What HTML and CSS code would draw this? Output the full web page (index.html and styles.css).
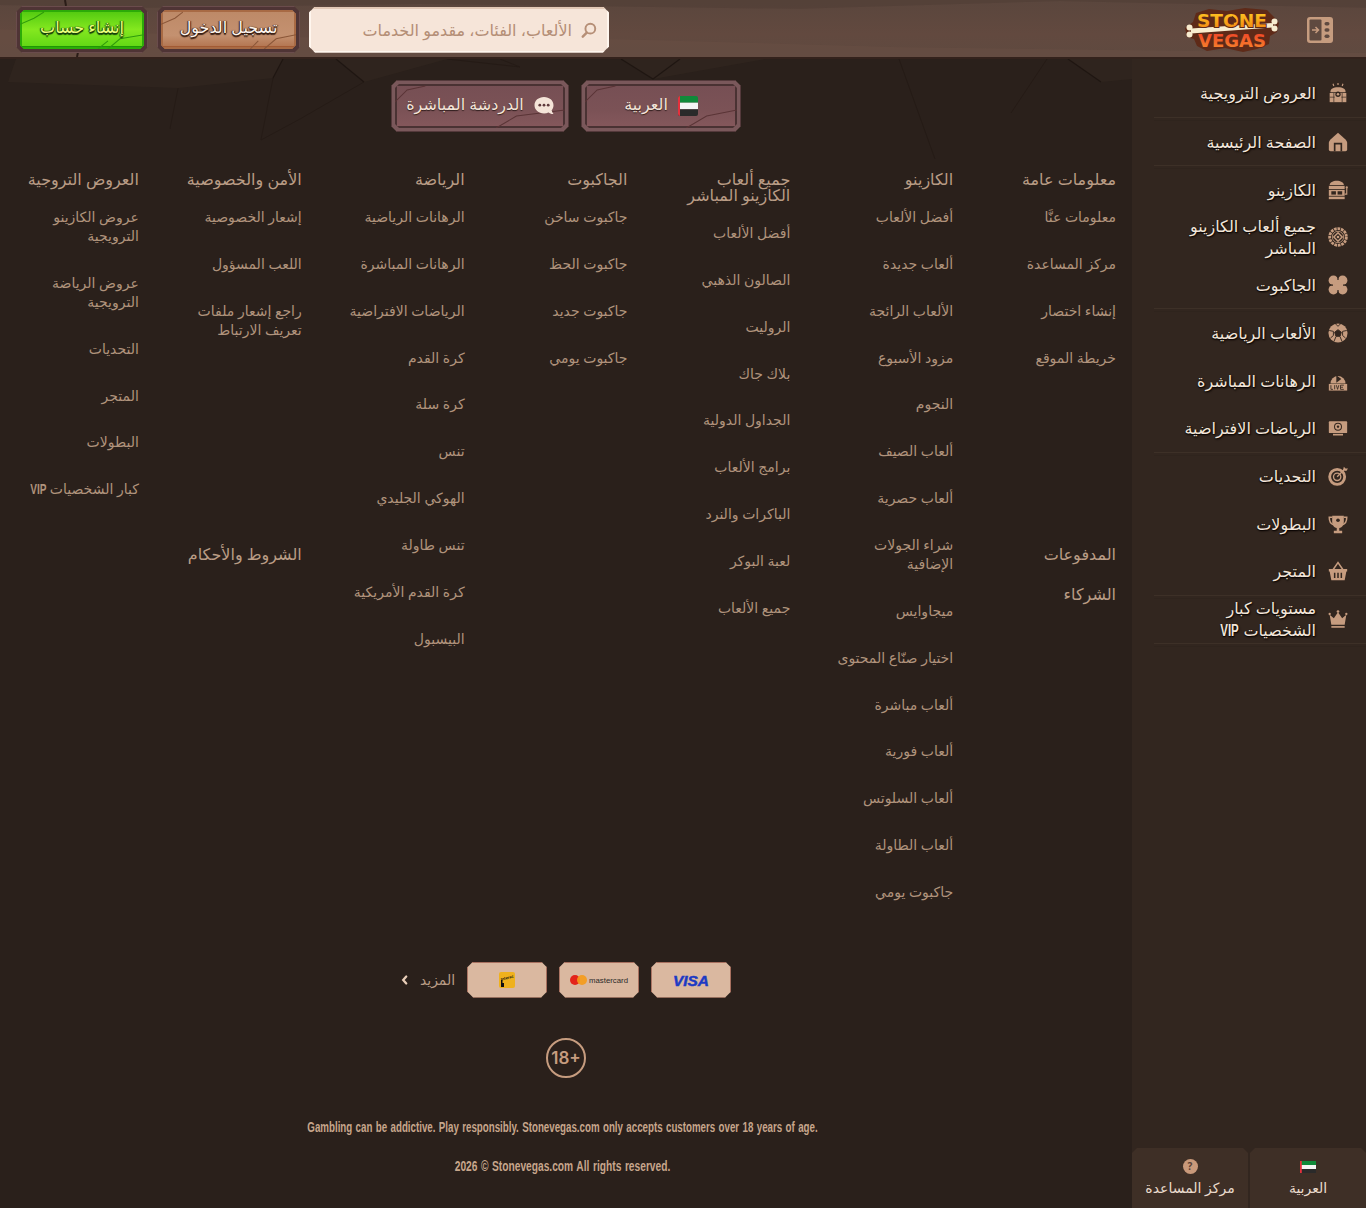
FILE: index.html
```html
<!DOCTYPE html>
<html lang="ar" dir="rtl">
<head>
    <meta charset="UTF-8">
    <title>Stone Vegas</title>
    <link rel="stylesheet" href="styles.css">
</head>
<body>
    <header class="topbar">
        <svg class="topbar-cracks" viewBox="0 0 1366 58" preserveAspectRatio="none">
            <path d="M0 30 L300 38 L620 40 L900 48 L1366 54 V58 H0Z" fill="#6a5045" opacity=".45"/>
            <path d="M0 0 H1366 V8 L1060 1 L800 9 L420 4 L150 8 L0 5Z" fill="#4e3b33" opacity=".5"/>
            <path d="M65 0 L66 6 M78 53 L77 58" fill="none" stroke="#2a1c17" stroke-width="2"/>
        </svg>
        <div class="topbar-right">
            <svg class="exit-icon" viewBox="0 0 28 28">
                <rect x="1" y="1" width="26" height="26" rx="3" fill="#c69c7f"/>
                <rect x="3.500" y="3.500" width="12" height="21" rx="1" fill="#5f4a40"/>
                <path d="M6 14h6M9.500 11l3 3-3 3" fill="none" stroke="#c69c7f" stroke-width="1.500"/>
                <rect x="18.500" y="6" width="5" height="3.400" rx="1.700" fill="#5f4a40"/>
                <rect x="18.500" y="12.300" width="5" height="3.400" rx="1.700" fill="#5f4a40"/>
                <rect x="18.500" y="18.600" width="5" height="3.400" rx="1.700" fill="#5f4a40"/>
            </svg>
            <svg class="logo" viewBox="0 0 94 44">
                <defs>
                    <linearGradient id="logoTop" x1="0" y1="0" x2="0" y2="1"><stop offset="0" stop-color="#ffcb24"/><stop offset="1" stop-color="#f0800f"/></linearGradient>
                    <linearGradient id="logoBottom" x1="0" y1="0" x2="0" y2="1"><stop offset="0" stop-color="#ee3f28"/><stop offset="1" stop-color="#f88b2c"/></linearGradient>
                </defs>
                <path d="M11 5 L24 1 L42 3 L60 0 L82 2 L87 7 L90 10 L94 15 L92 24 L85 28 L84 36 L72 41 L58 44 L40 40 L22 43 L12 38 L9 31 L2 29 L0 20 L8 14 Z" fill="#5e2a18"/>
                <path d="M6 20.500 L88 15 L88 19.500 L6 25.500Z" fill="#f7eccf"/>
                <circle cx="4.500" cy="19.500" r="3" fill="#f7eccf"/><circle cx="4.500" cy="26.500" r="3" fill="#f7eccf"/>
                <circle cx="89.500" cy="13.500" r="3" fill="#f7eccf"/><circle cx="89.500" cy="20.500" r="3" fill="#f7eccf"/>
                <text class="logo-word" x="47" y="19" text-anchor="middle" textLength="70" lengthAdjust="spacingAndGlyphs" fill="url(#logoTop)">STONE</text>
                <text class="logo-word" x="47" y="39" text-anchor="middle" textLength="68" lengthAdjust="spacingAndGlyphs" fill="url(#logoBottom)">VEGAS</text>
                <path d="M47.500 8 C49.500 10 51.500 11 51.500 13 C51.500 15 49 15 48.200 14 L49 16.500 H46 L46.800 14 C46 15 43.500 15 43.500 13 C43.500 11 45.500 10 47.500 8Z" fill="#5e2a18"/>
            </svg>
        </div>
        <div class="topbar-left">
            <form class="search">
                <svg class="search-icon" viewBox="0 0 18 18">
                    <circle cx="10.500" cy="7.500" r="5.500" fill="none" stroke="#b68f77" stroke-width="2.200"/>
                    <path d="M6.500 12 L2 16.500" stroke="#b68f77" stroke-width="2.800" stroke-linecap="round"/>
                </svg>
                <span class="search-placeholder">الألعاب، الفئات، مقدمو الخدمات</span>
            </form>
            <a class="stone-btn btn-login">
                <span class="stone-btn-face">
                    <svg class="stone-cracks" viewBox="0 0 136 38" preserveAspectRatio="none"><path d="M0 14 L14 8 L22 2 M104 38 L116 28 L136 24 M90 38 L98 30" fill="none" stroke="#8a5638" stroke-width="1"/></svg>
                    <span class="stone-btn-label">تسجيل الدخول</span>
                </span>
            </a>
            <a class="stone-btn btn-signup">
                <span class="stone-btn-face">
                    <svg class="stone-cracks" viewBox="0 0 124 38" preserveAspectRatio="none"><path d="M0 14 L14 8 L24 2 M88 38 L100 28 L124 24 M78 38 L88 30" fill="none" stroke="#2f9a0c" stroke-width="1"/></svg>
                    <span class="stone-btn-label">إنشاء حساب</span>
                </span>
            </a>
        </div>
    </header>

    <div class="page">
        <aside class="sidebar">
            <nav class="side-nav">
                <a class="side-item">
                    <svg class="side-icon" viewBox="0 0 24 24"><path d="M12 0v2.500M6 1l1 2.500M18 1l-1 2.500" stroke="#c69c7f" stroke-width="1.400"/><path d="M3 10c0-3 3-5 9-5s9 2 9 5v1H3z" fill="#c69c7f"/><path d="M2 12h20v11H2z" fill="#c69c7f"/><circle cx="12" cy="13.500" r="3.200" fill="#32261f"/><circle cx="12" cy="13.500" r="1.500" fill="#c69c7f"/><path d="M7 12v11M17 12v11M2 17h6M16 17h6" stroke="#32261f" stroke-width=".8"/></svg>
                    <span>العروض الترويجية</span>
                </a>
                <hr class="side-rule">
                <a class="side-item">
                    <svg class="side-icon" viewBox="0 0 24 24"><path d="M12 1 L21 9 Q23 11 23 13 V21 Q23 23 21 23 H3 Q1 23 1 21 V13 Q1 11 3 9 Z" fill="#c69c7f"/><path d="M7 23V13h10v10h-2v-8H9v8z" fill="#32261f"/></svg>
                    <span>الصفحة الرئيسية</span>
                </a>
                <hr class="side-rule">
                <a class="side-item">
                    <svg class="side-icon" viewBox="0 0 24 24"><path d="M2 6c0-3 4-5 8.500-5s8.500 2 8.500 5z" fill="#c69c7f"/><rect x="1" y="7" width="19" height="4" fill="#c69c7f"/><rect x="1" y="12" width="19" height="7" fill="#c69c7f"/><rect x="4" y="13.500" width="5.500" height="4" fill="#32261f"/><rect x="11.500" y="13.500" width="5.500" height="4" fill="#32261f"/><rect x="1" y="20" width="19" height="3" fill="#c69c7f"/><path d="M22.500 10v7h-2.500" fill="none" stroke="#c69c7f" stroke-width="1.400"/><circle cx="22.500" cy="9" r="1.400" fill="#c69c7f"/></svg>
                    <span>الكازينو</span>
                </a>
                <a class="side-item">
                    <svg class="side-icon" viewBox="0 0 24 24"><circle cx="12" cy="12" r="10" fill="none" stroke="#c69c7f" stroke-width="3.400" stroke-dasharray="3.200 1"/><circle cx="12" cy="12" r="6.800" fill="none" stroke="#c69c7f" stroke-width="1"/><path d="M12 7l5 5-5 5-5-5z" fill="none" stroke="#c69c7f" stroke-width="1.800"/><circle cx="12" cy="12" r="1.600" fill="#c69c7f"/></svg>
                    <span>جميع ألعاب الكازينو المباشر</span>
                </a>
                <a class="side-item">
                    <svg class="side-icon" viewBox="0 0 24 24"><circle cx="6.500" cy="6.500" r="5.800" fill="#c69c7f"/><circle cx="17.500" cy="6.500" r="5.800" fill="#c69c7f"/><circle cx="6.500" cy="17.500" r="5.800" fill="#c69c7f"/><circle cx="17.500" cy="17.500" r="5.800" fill="#c69c7f"/><path d="M12 7l5 5-5 5-5-5z" fill="#c69c7f"/><path d="M12 0V6M12 24V18M0 12H6M24 12H18" stroke="#32261f" stroke-width="1.500"/></svg>
                    <span>الجاكبوت</span>
                </a>
                <hr class="side-rule">
                <a class="side-item">
                    <svg class="side-icon" viewBox="0 0 24 24"><circle cx="12" cy="12" r="11.500" fill="#c69c7f"/><path d="M12 8l4 3-1.500 5h-5L8 11zM9 1l3 3 3-3M1.500 9l5 1 0 5-3.500 3M22.500 9l-5 1 0 5 3.500 3M7 22.500l2.500-6M17 22.500l-2.500-6" fill="none" stroke="#32261f" stroke-width="1.100"/><path d="M12 8l4 3-1.500 5h-5L8 11z" fill="#32261f"/></svg>
                    <span>الألعاب الرياضية</span>
                </a>
                <a class="side-item">
                    <svg class="side-icon" viewBox="0 0 24 24"><path d="M3 15a9 9 0 1 1 18 0z" fill="#c69c7f"/><path d="M10 5l6 4.500-6 4.500z" fill="#32261f"/><rect x="1" y="15.500" width="22" height="8" fill="#c69c7f"/><path d="M3.500 17v5h2.500M8 17v5M10 17l1.500 5 1.500-5M19 17h-4v5h4M15 19.500h3" fill="none" stroke="#32261f" stroke-width="1"/></svg>
                    <span>الرهانات المباشرة</span>
                </a>
                <a class="side-item">
                    <svg class="side-icon" viewBox="0 0 24 24"><rect x="1" y="4" width="22" height="14" rx="1" fill="#c69c7f"/><circle cx="12" cy="10.500" r="4.800" fill="#32261f"/><circle cx="12" cy="10.500" r="3.600" fill="#c69c7f"/><path d="M12 8.800l1.600 1.200-.6 1.800h-2l-.6-1.800z" fill="#32261f"/><path d="M6 20h12" stroke="#c69c7f" stroke-width="2"/></svg>
                    <span>الرياضات الافتراضية</span>
                </a>
                <hr class="side-rule">
                <a class="side-item">
                    <svg class="side-icon" viewBox="0 0 24 24"><circle cx="11" cy="13" r="9" fill="none" stroke="#c69c7f" stroke-width="3.400"/><circle cx="11" cy="13" r="4.400" fill="none" stroke="#c69c7f" stroke-width="1.600"/><path d="M11 13 L20 4" stroke="#c69c7f" stroke-width="1.600"/><path d="M18 5l1-4 2 2 3 0-2 3z" fill="#c69c7f"/></svg>
                    <span>التحديات</span>
                </a>
                <a class="side-item">
                    <svg class="side-icon" viewBox="0 0 24 24"><path d="M5 2h14v7c0 5-3 8-7 8s-7-3-7-8z" fill="#c69c7f"/><path d="M5 4H1.500c0 5 2 8 5 9M19 4h3.500c0 5-2 8-5 9" fill="none" stroke="#c69c7f" stroke-width="1.800"/><path d="M10.500 16h3v4h-3zM7 20h10v3H7z" fill="#c69c7f"/><circle cx="12" cy="7.500" r="2.200" fill="#32261f"/></svg>
                    <span>البطولات</span>
                </a>
                <a class="side-item">
                    <svg class="side-icon" viewBox="0 0 24 24"><path d="M6 10.500 L12 2 L18 10.500" fill="none" stroke="#c69c7f" stroke-width="1.800"/><path d="M1 9.500h22v3h-1l-2 10.500H4L2 12.500H1z" fill="#c69c7f"/><path d="M8 14v6.500M12 14v6.500M16 14v6.500" stroke="#32261f" stroke-width="1.800"/></svg>
                    <span>المتجر</span>
                </a>
                <hr class="side-rule">
                <a class="side-item">
                    <svg class="side-icon" viewBox="0 0 24 24"><path d="M2 7l5 4 5-7 5 7 5-4-2 12H4z" fill="#c69c7f"/><circle cx="12" cy="3" r="1.600" fill="#c69c7f"/><circle cx="2" cy="6" r="1.400" fill="#c69c7f"/><circle cx="22" cy="6" r="1.400" fill="#c69c7f"/><rect x="4" y="20.500" width="16" height="2" fill="#c69c7f"/></svg>
                    <span class="side-vip">مستويات كبار الشخصيات <b class="vip">VIP</b></span>
                </a>
                <hr class="side-rule">
            </nav>
            <div class="side-bottom">
                <a class="side-tile">
                    <svg class="flag" viewBox="0 0 16 12">
                        <rect width="16" height="4" fill="#108a3a"/><rect y="4" width="16" height="4" fill="#f5f5f5"/><rect y="8" width="16" height="4" fill="#2a2a2a"/><rect width="1.800" height="12" fill="#e5303c"/>
                    </svg>
                    <span>العربية</span>
                </a>
                <a class="side-tile">
                    <span class="help-dot">?</span>
                    <span>مركز المساعدة</span>
                </a>
            </div>
        </aside>

        <main class="main">
            <svg class="rock-bg" viewBox="0 0 1132 110" preserveAspectRatio="none">
                <path d="M16 0 L8 23 L178 29 L273 19 L283 0Z M336 0 L364 23 L447 0Z M621 0 L653 20 L765 0Z M1068 0 L1101 23 L1132 20 V0Z" fill="#32271f" opacity=".7"/>
                <path d="M364 23 L300 60 L261 81 L273 19 M178 29 L170 70 M447 0 L520 8 L500 0 M899 0 L935 100 M1047 0 L1011 54" fill="none" stroke="#251b16" stroke-width="1"/>
                <path d="M283 0 L273 19 M336 0 L364 23 M621 0 L653 20 L680 0 M1068 0 L1101 23" fill="none" stroke="#1f1612" stroke-width="1.200"/>
            </svg>
            <div class="main-actions">
                <a class="stone-btn btn-plum">
                    <span class="stone-btn-face">
                        <svg class="stone-cracks" viewBox="0 0 150 44" preserveAspectRatio="none"><path d="M0 18 L12 6 L30 2 M100 44 L120 32 L150 26" fill="none" stroke="#5a3436" stroke-width="1"/></svg>
                        <svg class="flag" viewBox="0 0 20 20">
                            <rect width="20" height="6.700" fill="#108a3a"/><rect y="6.700" width="20" height="6.600" fill="#f5f5f5"/><rect y="13.300" width="20" height="6.700" fill="#2a2a2a"/><rect width="2" height="20" fill="#e5303c"/>
                        </svg>
                        <span class="stone-btn-label">العربية</span>
                    </span>
                </a>
                <a class="stone-btn btn-plum">
                    <span class="stone-btn-face">
                        <svg class="stone-cracks" viewBox="0 0 168 44" preserveAspectRatio="none"><path d="M0 18 L12 6 L30 2 M100 44 L120 32 L168 26" fill="none" stroke="#5a3436" stroke-width="1"/></svg>
                        <svg class="chat-icon" viewBox="0 0 20 20">
                            <path d="M10 1c5.500 0 9.500 3.600 9.500 8.200c0 2-.7 3.700-1.900 5.100c.3 1.500 1 2.700 1.900 3.700c-2 .2-3.800-.5-5-1.500c-1.400.6-2.900.9-4.500.9c-5.500 0-9.500-3.600-9.500-8.200S4.500 1 10 1z" fill="#f4e4d8"/>
                            <circle cx="5.800" cy="9.200" r="1.400" fill="#5f3a3c"/><circle cx="10" cy="9.200" r="1.400" fill="#5f3a3c"/><circle cx="14.200" cy="9.200" r="1.400" fill="#5f3a3c"/>
                        </svg>
                        <span class="stone-btn-label">الدردشة المباشرة</span>
                    </span>
                </a>
            </div>

            <div class="footer-grid">
                <section class="fcol fcol-1">
                    <h3>معلومات عامة</h3>
                    <ul>
                        <li>معلومات عنَّا</li>
                        <li>مركز المساعدة</li>
                        <li>إنشاء اختصار</li>
                        <li>خريطة الموقع</li>
                    </ul>
                </section>
                <section class="fcol fcol-1 frow-2"><h3>المدفوعات</h3></section>
                <section class="fcol fcol-1 frow-3"><h3>الشركاء</h3></section>

                <section class="fcol fcol-2 fcol-tall">
                    <h3>الكازينو</h3>
                    <ul>
                        <li>أفضل الألعاب</li>
                        <li>ألعاب جديدة</li>
                        <li>الألعاب الرائجة</li>
                        <li>مزود الأسبوع</li>
                        <li>النجوم</li>
                        <li>ألعاب الصيف</li>
                        <li>ألعاب حصرية</li>
                        <li>شراء الجولات الإضافية</li>
                        <li>ميجاوايس</li>
                        <li>اختيار صنّاع المحتوى</li>
                        <li>ألعاب مباشرة</li>
                        <li>ألعاب فورية</li>
                        <li>ألعاب السلوتس</li>
                        <li>ألعاب الطاولة</li>
                        <li>جاكبوت يومي</li>
                    </ul>
                </section>

                <section class="fcol fcol-3 fcol-tall">
                    <h3>جميع ألعاب الكازينو المباشر</h3>
                    <ul>
                        <li>أفضل الألعاب</li>
                        <li>الصالون الذهبي</li>
                        <li>الروليت</li>
                        <li>بلاك جاك</li>
                        <li>الجداول الدولية</li>
                        <li>برامج الألعاب</li>
                        <li>الباكرات والنرد</li>
                        <li>لعبة البوكر</li>
                        <li>جميع الألعاب</li>
                    </ul>
                </section>

                <section class="fcol fcol-4 fcol-tall">
                    <h3>الجاكبوت</h3>
                    <ul>
                        <li>جاكبوت ساخن</li>
                        <li>جاكبوت الحظ</li>
                        <li>جاكبوت جديد</li>
                        <li>جاكبوت يومي</li>
                    </ul>
                </section>

                <section class="fcol fcol-5 fcol-tall">
                    <h3>الرياضة</h3>
                    <ul>
                        <li>الرهانات الرياضية</li>
                        <li>الرهانات المباشرة</li>
                        <li>الرياضات الافتراضية</li>
                        <li>كرة القدم</li>
                        <li>كرة سلة</li>
                        <li>تنس</li>
                        <li>الهوكي الجليدي</li>
                        <li>تنس طاولة</li>
                        <li>كرة القدم الأمريكية</li>
                        <li>البيسبول</li>
                    </ul>
                </section>

                <section class="fcol fcol-6">
                    <h3>الأمن والخصوصية</h3>
                    <ul>
                        <li>إشعار الخصوصية</li>
                        <li>اللعب المسؤول</li>
                        <li>راجع إشعار ملفات تعريف الارتباط</li>
                    </ul>
                </section>
                <section class="fcol fcol-6 frow-2"><h3>الشروط والأحكام</h3></section>

                <section class="fcol fcol-7">
                    <h3>العروض التروجية</h3>
                    <ul>
                        <li>عروض الكازينو الترويجية</li>
                        <li>عروض الرياضة الترويجية</li>
                        <li>التحديات</li>
                        <li>المتجر</li>
                        <li>البطولات</li>
                        <li>كبار الشخصيات <b class="vip">VIP</b></li>
                    </ul>
                </section>
            </div>

            <div class="payments">
                <div class="pay-tile">
                    <svg class="pay-visa" viewBox="0 0 40 20"><text x="20" y="16" text-anchor="middle" textLength="36" lengthAdjust="spacingAndGlyphs" class="visa-text">VISA</text></svg>
                </div>
                <div class="pay-tile">
                    <svg class="pay-mc" viewBox="0 0 60 16">
                        <circle cx="6" cy="8" r="5" fill="#e3241b"/><circle cx="13" cy="8" r="5" fill="#f59b1b" opacity=".92"/>
                        <text x="20" y="10.500" textLength="39" lengthAdjust="spacingAndGlyphs" class="mc-text">mastercard</text>
                    </svg>
                </div>
                <div class="pay-tile">
                    <svg class="pay-interac" viewBox="0 0 16 16">
                        <rect width="16" height="16" rx="2" fill="#efb11d"/>
                        <text x="8.500" y="7" text-anchor="middle" class="interac-text" transform="rotate(-14 9 7)">Interac</text>
                        <path d="M2 8h1.500v3H5v4H2z" fill="#111"/>
                    </svg>
                </div>
                <a class="pay-more">
                    <span>المزيد</span>
                    <svg class="chevron" viewBox="0 0 8 12"><path d="M6 2L2.500 6L6 10" fill="none" stroke="#e8cdb8" stroke-width="2.600" stroke-linecap="round"/></svg>
                </a>
            </div>

            <div class="age-badge">18+</div>

            <div class="legal" dir="ltr">
                <p class="legal-long">Gambling can be addictive. Play responsibly. Stonevegas.com only accepts customers over 18 years of age.</p>
                <p class="legal-short">2026 © Stonevegas.com All rights reserved.</p>
            </div>
        </main>
    </div>
</body>
</html>
```
FILE: styles.css
```css
* {
    box-sizing: border-box;
}
html, body {
    margin: 0;
    padding: 0;
}
body {
    width: 1366px;
    height: 1208px;
    overflow: hidden;
    background: #2a201b;
    font-family: "Noto Sans", "DejaVu Sans", sans-serif;
    color: #b99c85;
}

/* top bar */
.topbar {
    position: relative;
    height: 59px;
    display: flex;
    justify-content: space-between;
    align-items: center;
    padding: 2px 16px 0;
    background: linear-gradient(to bottom, #5a463d, #62493f 60%, #5f4a40);
    border-bottom: 2px solid #33221c;
}
.topbar-cracks {
    position: absolute;
    inset: 0;
    width: 100%;
    height: 100%;
}
.topbar-right, .topbar-left {
    position: relative;
    display: flex;
    align-items: center;
}
.topbar-right {
    gap: 27px;
    padding-right: 16px;
}
.topbar-left {
    gap: 9px;
}
.exit-icon {
    width: 28px;
    height: 28px;
}
.logo {
    width: 94px;
    height: 44px;
    direction: ltr;
}
.logo-word {
    font-family: "DejaVu Sans", sans-serif;
    font-size: 17px;
    font-weight: 700;
    stroke: #5e2a18;
    stroke-width: 2px;
    paint-order: stroke;
}
.search {
    width: 300px;
    height: 46px;
    display: flex;
    align-items: center;
    gap: 9px;
    padding: 0 10px;
    background: #f6e5d9;
    border: 2px solid #fff6ee;
    border-top-color: #e2c8b6;
    clip-path: polygon(6px 0, calc(100% - 6px) 0, 100% 6px, 100% calc(100% - 6px), calc(100% - 6px) 100%, 6px 100%, 0 calc(100% - 6px), 0 6px);
}
.search-icon {
    width: 16px;
    height: 18px;
}
.search-placeholder {
    font-size: 16px;
    color: #b48e76;
}

/* chamfered buttons */
.stone-btn {
    display: block;
    padding: 4px;
    clip-path: polygon(6px 0, calc(100% - 6px) 0, 100% 6px, 100% calc(100% - 6px), calc(100% - 6px) 100%, 6px 100%, 0 calc(100% - 6px), 0 6px);
}
.stone-btn-face {
    position: relative;
    display: flex;
    align-items: center;
    justify-content: center;
    height: 100%;
    clip-path: polygon(4px 0, calc(100% - 4px) 0, 100% 4px, 100% calc(100% - 4px), calc(100% - 4px) 100%, 4px 100%, 0 calc(100% - 4px), 0 4px);
}
.stone-cracks {
    position: absolute;
    inset: 0;
    width: 100%;
    height: 100%;
}
.stone-btn-label {
    position: relative;
    padding-bottom: 5px;
    font-size: 16px;
}
.btn-login {
    width: 143px;
    height: 47px;
    background: #4f3435;
    box-shadow: inset 0 0 0 1px #6a4c4c;
}
.btn-login .stone-btn-face {
    background: linear-gradient(to bottom, #bd8967, #c49170 65%, #b0704b);
    box-shadow: inset 0 0 0 2px #a86a44, inset 0 -3px 0 #a25a34;
}
.btn-login .stone-btn-label {
    color: #fff6ee;
    text-shadow: 0 1px 0 #3a1f14, 1px 0 1px #3a1f14, -1px 0 1px #3a1f14, 0 2px 1px #3a1f14;
}
.btn-signup {
    width: 132px;
    height: 47px;
    background: #4f3435;
    box-shadow: inset 0 0 0 1px #6a4c4c;
}
.btn-signup .stone-btn-face {
    background: linear-gradient(to bottom, #4fc810, #84e81f 50%, #5dd414);
    box-shadow: inset 0 0 0 2px #2cab08, inset 0 -3px 0 #1f9406;
}
.btn-signup .stone-btn-label {
    color: #eaff7c;
    text-shadow: 0 1px 0 #14400a, 1px 0 1px #14400a, -1px 0 1px #14400a, 0 2px 1px #14400a;
}
.btn-plum {
    height: 52px;
    background: #7a585b;
    box-shadow: inset 0 0 0 1px #54393b;
}
.btn-plum .stone-btn-face {
    gap: 10px;
    background: linear-gradient(to bottom, #764f54, #7b5256 60%, #85585c);
    box-shadow: inset 0 0 0 2px #4a3233;
}
.btn-plum .stone-btn-label {
    color: #f4e4d8;
    text-shadow: 0 1px 1px #2f1d1d;
}
.btn-plum:first-child {
    width: 160px;
}
.btn-plum:last-child {
    width: 178px;
}
.btn-plum .flag {
    position: relative;
    width: 20px;
    height: 20px;
    border-radius: 2px;
}
.chat-icon {
    position: relative;
    width: 20px;
    height: 20px;
}

/* layout */
.page {
    display: flex;
    height: 1149px;
}
.sidebar {
    width: 234px;
    flex: none;
    display: flex;
    flex-direction: column;
    background: #32261f;
    padding-top: 10.500px;
}
.side-nav {
    display: flex;
    flex-direction: column;
}
.side-item {
    display: flex;
    align-items: center;
    gap: 12px;
    min-height: 47.400px;
    padding: 0 18px 0 40px;
    font-size: 16px;
    line-height: 22px;
    color: #f3e6da;
    text-shadow: 1px 1px 2px #0d0705, 0 1px 1px #0d0705;
}
.side-icon {
    width: 20px;
    height: 20px;
    flex: none;
}
.side-rule {
    height: 1px;
    margin: 0 0 0 22px;
    border: 0;
    background: #3d3027;
    box-shadow: 0 3px 0 #2f241d;
}
.side-bottom {
    margin-top: auto;
    display: flex;
    gap: 2px;
    height: 60px;
}
.side-tile {
    flex: 1;
    display: flex;
    flex-direction: column;
    align-items: center;
    justify-content: center;
    gap: 4px;
    background: #3e2f26;
    font-size: 14px;
    color: #eadbcd;
    clip-path: polygon(5px 0, calc(100% - 5px) 0, 100% 5px, 100% 100%, 0 100%, 0 5px);
}
.side-tile .flag {
    width: 16px;
    height: 12px;
    margin: 1px 0;
}
.help-dot {
    width: 15px;
    height: 15px;
    border-radius: 50%;
    background: #c9997a;
    color: #5a4034;
    font-size: 10px;
    font-weight: 700;
    line-height: 15px;
    text-align: center;
}
.vip {
    display: inline-block;
    line-height: 1;
    font-family: "Liberation Sans", sans-serif;
    font-weight: 700;
    transform: scaleX(.72);
    transform-origin: right center;
}

/* main column */
.main {
    position: relative;
    flex: 1;
    padding: 21px 16px 0;
}
.rock-bg {
    position: absolute;
    top: 0;
    left: 0;
    width: 100%;
    height: 110px;
}
.main-actions {
    position: relative;
    display: flex;
    justify-content: center;
    gap: 12px;
}

/* footer links */
.footer-grid {
    display: grid;
    grid-template-columns: repeat(7, 1fr);
    grid-template-rows: auto auto 1fr;
    column-gap: 40px;
    row-gap: 4px;
    margin-top: 39px;
    align-items: start;
}
.fcol-1 { grid-column: 1; }
.fcol-2 { grid-column: 2; }
.fcol-3 { grid-column: 3; }
.fcol-4 { grid-column: 4; }
.fcol-5 { grid-column: 5; }
.fcol-6 { grid-column: 6; }
.fcol-7 { grid-column: 7; }
.fcol-tall { grid-row: 1 / span 3; }
.frow-2 { grid-row: 2; }
.frow-3 { grid-row: 3; }
.fcol h3 {
    margin: 0 0 20px;
    font-size: 16px;
    font-weight: 400;
    line-height: 16px;
    color: #b99c85;
}
.fcol ul {
    list-style: none;
    margin: 0 0 43.500px;
    padding: 0;
}
.fcol li {
    margin-bottom: 27.870px;
    font-size: 14px;
    line-height: 19px;
    color: #b0937c;
}

/* payments */
.payments {
    display: flex;
    justify-content: center;
    align-items: center;
    gap: 12px;
    margin-top: 17px;
    height: 36px;
}
.pay-tile {
    width: 80px;
    height: 36px;
    display: flex;
    align-items: center;
    justify-content: center;
    background: #dab8a0;
    border: 1px solid #a8705f;
    clip-path: polygon(6px 0, calc(100% - 6px) 0, 100% 6px, 100% calc(100% - 6px), calc(100% - 6px) 100%, 6px 100%, 0 calc(100% - 6px), 0 6px);
}
.pay-visa {
    width: 40px;
    height: 20px;
    direction: ltr;
}
.visa-text {
    font-family: "Liberation Sans", sans-serif;
    font-size: 15px;
    font-weight: 700;
    font-style: italic;
    fill: #1c3ac4;
    stroke: #1c3ac4;
    stroke-width: .5px;
}
.pay-mc {
    width: 60px;
    height: 16px;
    direction: ltr;
}
.mc-text {
    font-family: "Liberation Sans", sans-serif;
    font-size: 7px;
    fill: #2a2a2a;
}
.pay-interac {
    width: 16px;
    height: 16px;
    direction: ltr;
}
.interac-text {
    font-family: "Liberation Sans", sans-serif;
    font-size: 4px;
    font-weight: 700;
    fill: #111;
}
.pay-more {
    display: flex;
    align-items: center;
    gap: 12px;
    font-size: 14px;
    color: #b99c85;
}
.chevron {
    width: 7px;
    height: 12px;
}
.age-badge {
    width: 40px;
    height: 40px;
    margin: 40px auto 0;
    border: 2px solid #c69c7f;
    border-radius: 50%;
    font-family: Inter, sans-serif;
    font-size: 17px;
    font-weight: 600;
    line-height: 36px;
    text-align: center;
    color: #c69c7f;
    direction: ltr;
}
.legal {
    margin-top: 41px;
    padding-right: 7px;
    text-align: center;
    font-family: "Liberation Sans", sans-serif;
    font-size: 14px;
    font-weight: 700;
    color: #c7a68c;
}
.legal p {
    margin: 0 0 23px;
    line-height: 16px;
    white-space: nowrap;
    word-spacing: 1px;
}
.legal-long {
    transform: scaleX(.695);
}
.legal-short {
    transform: scaleX(.729);
}
```
